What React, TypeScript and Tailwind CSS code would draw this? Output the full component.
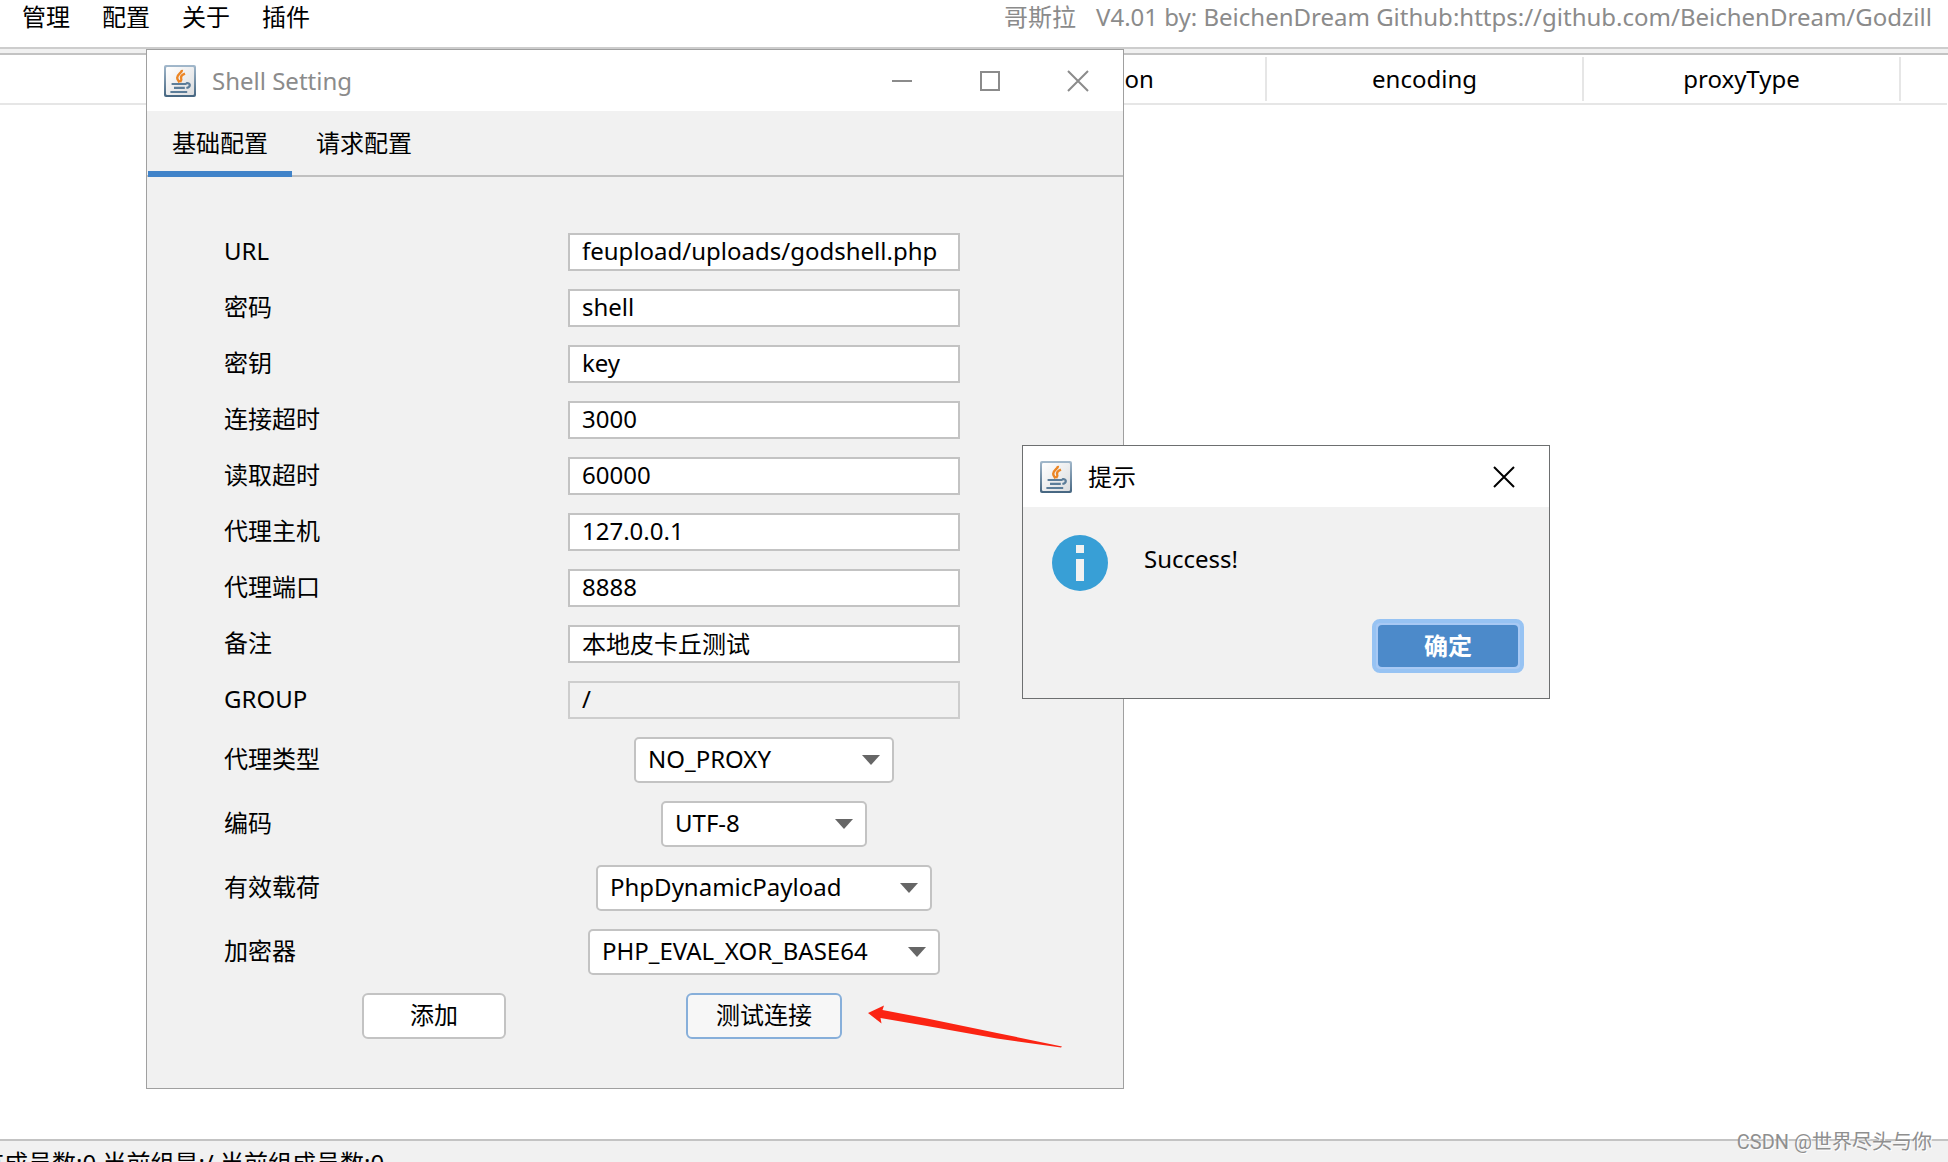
import React from "react";

const FONT = "font-['Noto_Sans','Noto_Sans_CJK_SC',sans-serif]";

function JavaIcon() {
  return (
    <svg viewBox="0 0 16 16" className="size-8 shrink-0" aria-hidden="true">
      <defs>
        <linearGradient id="javaFrame" x1="0" y1="0" x2="0" y2="1">
          <stop offset="0" stopColor="#a3b9cc" />
          <stop offset="1" stopColor="#456580" />
        </linearGradient>
        <linearGradient id="javaFace" x1="0" y1="0" x2="1" y2="1">
          <stop offset="0" stopColor="#ffffff" />
          <stop offset="1" stopColor="#dcdddf" />
        </linearGradient>
      </defs>
      <rect width="16" height="16" rx="1" fill="url(#javaFrame)" />
      <rect x="1" y="1" width="14" height="14" rx="0.6" fill="url(#javaFace)" />
      <path
        d="M9 2.4C9.2 3.9 6.5 4.6 6.6 6.4c0 .9.7 1.4 1.1 2.3M10.5 4.3C9.2 4.8 8.2 5.6 8.6 6.7c.3.6 0 1.2-.5 1.8"
        fill="none"
        stroke="#ec8524"
        strokeWidth="1.2"
      />
      <path
        d="M3.8 9.5h7.4M5 11.4h5.4M3.2 13.5h8.4M11 9.2c2.4-.6 2.6 1.8.2 2.3"
        fill="none"
        stroke="#5c7d99"
        strokeWidth="1.1"
      />
    </svg>
  );
}

function CloseIcon() {
  return (
    <svg viewBox="0 0 22 22" className="size-[22px]" aria-hidden="true">
      <path d="M1 1 21 21M21 1 1 21" stroke="currentColor" strokeWidth="2" fill="none" />
    </svg>
  );
}

const columns = ["id", "url", "payload", "cryption", "encoding", "proxyType"];

const fields = [
  { id: "url", label: "URL", value: "feupload/uploads/godshell.php" },
  { id: "password", label: "密码", value: "shell" },
  { id: "key", label: "密钥", value: "key" },
  { id: "connTimeout", label: "连接超时", value: "3000" },
  { id: "readTimeout", label: "读取超时", value: "60000" },
  { id: "proxyHost", label: "代理主机", value: "127.0.0.1" },
  { id: "proxyPort", label: "代理端口", value: "8888" },
  { id: "remark", label: "备注", value: "本地皮卡丘测试" },
  { id: "group", label: "GROUP", value: "/", readOnly: true },
];

const selects = [
  { id: "proxyType", label: "代理类型", value: "NO_PROXY", width: "w-[260px]" },
  { id: "encoding", label: "编码", value: "UTF-8", width: "w-[206px]" },
  { id: "payload", label: "有效载荷", value: "PhpDynamicPayload", width: "w-[336px]" },
  { id: "cryption", label: "加密器", value: "PHP_EVAL_XOR_BASE64", width: "w-[352px]" },
];

function ShellSetting() {
  return (
    <section
      aria-label="Shell Setting"
      className="absolute left-[146px] top-[49px] z-10 w-[978px] border border-[#a0a0a0] bg-[#f1f1f1]"
    >
      <header className="flex h-[61px] items-center bg-white pl-[17px] pr-[34px] text-[#8b8b8b]">
        <JavaIcon />
        <h1 className="ml-4 flex-1">Shell Setting</h1>
        <div className="flex items-center gap-[66px]">
          <button aria-label="Minimize" className="flex h-[22px] w-[22px] items-center justify-center">
            <span className="h-[2px] w-5 bg-[#8b8b8b]" />
          </button>
          <button aria-label="Maximize" className="flex h-[22px] w-[22px] items-center justify-center">
            <span className="size-5 border-2 border-[#8b8b8b]" />
          </button>
          <button aria-label="Close">
            <CloseIcon />
          </button>
        </div>
      </header>

      <div role="tablist" className="flex h-[66px] px-px shadow-[inset_0_-2px_0_#c0c0c0]">
        <button role="tab" aria-selected="true" className="w-36 border-b-[6px] border-[#4083c9] pt-1">
          基础配置
        </button>
        <button role="tab" aria-selected="false" className="w-36 border-b-[6px] border-transparent pt-1">
          请求配置
        </button>
      </div>

      <form
        className="grid grid-cols-[344px_392px] items-center gap-y-[18px] pb-[49px] pl-[77px] pt-14"
        onSubmit={(e) => e.preventDefault()}
      >
        {fields.map((f) => (
          <React.Fragment key={f.id}>
            <label htmlFor={f.id} className="pb-0.5 leading-9">
              {f.label}
            </label>
            <input
              id={f.id}
              defaultValue={f.value}
              readOnly={f.readOnly}
              className="h-[38px] w-full border-2 border-[#c3c3c3] bg-white px-3 pb-1 leading-[30px] outline-none read-only:border-[#cdcdcd] read-only:bg-[#f1f1f1]"
            />
          </React.Fragment>
        ))}
        {selects.map((s) => (
          <React.Fragment key={s.id}>
            <label htmlFor={s.id} className="pb-0.5 leading-9">
              {s.label}
            </label>
            <div className={"relative justify-self-center " + s.width}>
              <select
                id={s.id}
                className="block h-[46px] w-full appearance-none rounded-[5px] border-2 border-[#c3c3c3] bg-white pb-0.5 pl-3 outline-none"
              >
                <option>{s.value}</option>
              </select>
              <svg
                viewBox="0 0 18 10"
                className="pointer-events-none absolute right-[14px] top-[18px] h-[10px] w-[18px]"
                aria-hidden="true"
              >
                <path d="M0 0h18l-9 10z" fill="#666" />
              </svg>
            </div>
          </React.Fragment>
        ))}
        <div className="flex justify-center pl-[76px]">
          <button className="h-[46px] w-36 rounded-[6px] border-2 border-[#c3c3c3] bg-white pb-0.5">添加</button>
        </div>
        <div className="relative flex justify-center">
          <button className="h-[46px] w-[156px] rounded-[6px] border-2 border-[#87afda] bg-[#f7f7f7] pb-0.5">
            测试连接
          </button>
          <svg
            viewBox="0 0 196 44"
            className="pointer-events-none absolute left-[299px] top-[11px] h-11 w-[196px]"
            aria-hidden="true"
          >
            <path d="M1 9 17 1.5 15.5 6 60 14.5 130 29 195 42.5 194 43.5 130 34.5 60 22 13.5 14 14.5 19.5z" fill="#fb2413" />
          </svg>
        </div>
      </form>
    </section>
  );
}

function SuccessDialog() {
  return (
    <section
      role="dialog"
      aria-label="提示"
      className="absolute left-[1022px] top-[445px] z-20 w-[528px] border border-[#6d6f70] bg-[#f1f1f1]"
    >
      <header className="flex h-[61px] items-center bg-white pl-[17px] pr-[34px]">
        <JavaIcon />
        <h2 className="ml-4 flex-1">提示</h2>
        <button aria-label="Close">
          <CloseIcon />
        </button>
      </header>
      <div className="flex items-start gap-9 pl-[29px] pt-7">
        <svg viewBox="0 0 56 56" className="size-14" aria-hidden="true">
          <circle cx="28" cy="28" r="28" fill="#389fd6" />
          <path d="M24 10h8v8h-8zM24 24h8v22h-8z" fill="#f1f1f1" />
        </svg>
        <p className="pt-2 leading-8">Success!</p>
      </div>
      <div className="flex justify-end pb-[25px] pr-[25px] pt-7">
        <button className="h-[54px] w-[152px] rounded-[8px] border-[4px] border-[#97c3f3] bg-[#a8c9f4] p-[2px] font-bold text-white">
          <span className="flex h-full items-center justify-center rounded-[4px] bg-[#4c8aca]">确定</span>
        </button>
      </div>
    </section>
  );
}

export default function App() {
  return (
    <div
      className={
        "relative flex h-screen flex-col overflow-hidden bg-white text-[24px] leading-9 text-black " + FONT
      }
    >
      <nav className="flex h-[49px] shrink-0 items-start justify-between border-b-2 border-[#cdcdcd] pl-[22px] leading-[34px]">
        <div className="flex gap-8">
          {["管理", "配置", "关于", "插件"].map((m) => (
            <button key={m}>{m}</button>
          ))}
        </div>
        <div className="flex w-[944px] gap-5 whitespace-nowrap text-[#8b8b8b]">
          <span>哥斯拉</span>
          <span>V4.01 by: BeichenDream Github:https://github.com/BeichenDream/Godzill</span>
        </div>
      </nav>

      <main className="flex-1 border-t-4 border-[#f1f1f1]">
        <div className="overflow-hidden border-t-2 border-[#c3c3c3]">
          <table className="-ml-px w-full table-fixed border-separate border-spacing-0 border-b-2 border-[#e6e6e6]">
            <thead>
              <tr className="h-12">
                {columns.map((c) => (
                  <th key={c} className="w-[317px] p-0 font-normal">
                    <div className="h-11 border-r-2 border-[#e6e6e6] leading-[44px]">{c}</div>
                  </th>
                ))}
                <th />
              </tr>
            </thead>
          </table>
        </div>
      </main>

      <footer className="h-[23px] shrink-0 overflow-hidden whitespace-nowrap border-t-2 border-[#c3c3c3] bg-[#f1f1f1] pt-1">
        <div className="-ml-5">有成员数:0 当前组是:/ 当前组成员数:0</div>
      </footer>

      <ShellSetting />
      <SuccessDialog />

      <div className="absolute bottom-1 right-4 z-30 text-[20px] leading-8 text-[#8f8f8f] [text-shadow:1px_1px_0_#fff] font-['Roboto','Noto_Sans_CJK_SC',sans-serif]">
        CSDN @世界尽头与你
      </div>
    </div>
  );
}
